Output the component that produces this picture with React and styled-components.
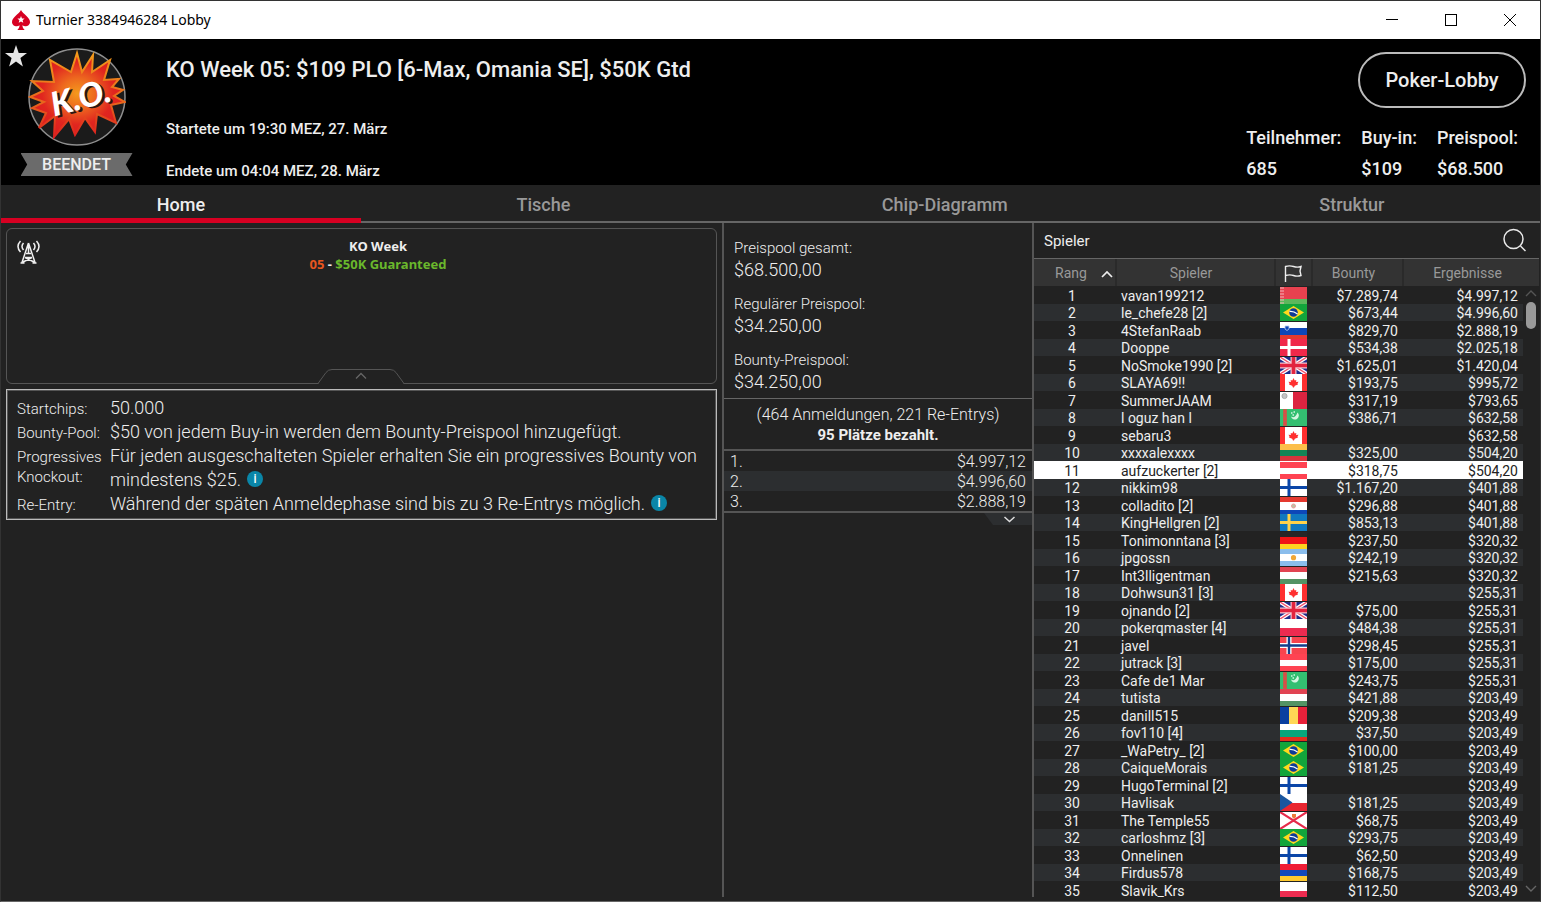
import React from 'react';
import styled, { createGlobalStyle, css } from 'styled-components';

const FLAGS = {
    by: { rows: [['#e8414f', 12], ['#5cb85c', 5]] },
    br: { rows: [['#12a53b', 17]] },
    si: { rows: [['#fff', 6], ['#0d47b8', 7], ['#e4392f', 4]] },
    dk: { rows: [['#f0284a', 17]], cross: ['#fff', 3] },
    gb: { rows: [['#1f2d8a', 17]] },
    ca: { cols: [['#ff2f2f', 5], ['#fff', 17], ['#ff2f2f', 5]] },
    mt: { cols: [['#fff', 13], ['#dc2440', 14]] },
    tm: { rows: [['#33bf71', 17]] },
    lt: { rows: [['#fcbe49', 6], ['#148556', 6], ['#d8343c', 5]] },
    at: { rows: [['#ff4352', 6], ['#fff', 6], ['#ff4352', 5]] },
    fi: { rows: [['#fff', 17]], cross: ['#0a46a8', 3] },
    py: { rows: [['#e4392f', 5], ['#fff', 8], ['#0d47b8', 4]] },
    se: { rows: [['#1079bf', 17]], cross: ['#ffd24a', 3] },
    de: { rows: [['#262626', 5], ['#f01515', 7], ['#ffd31f', 5]] },
    ar: { rows: [['#8abdec', 5], ['#fff', 7], ['#8abdec', 5]] },
    hu: { rows: [['#e14352', 5], ['#fff', 7], ['#539364', 5]] },
    pl: { rows: [['#fff', 9], ['#ed2b50', 8]] },
    no: { rows: [['#f7444e', 17]], cross: ['#fff', 5] },
    ro: { cols: [['#0a3fa0', 9], ['#ffd755', 9], ['#e8213a', 9]] },
    bg: { rows: [['#fff', 6], ['#06a77c', 7], ['#e0301e', 4]] },
    cz: { rows: [['#fff', 9], ['#e92630', 8]] },
    je: { rows: [['#fff', 17]] },
    am: { rows: [['#f01c35', 6], ['#1148ba', 6], ['#fec92e', 5]] },
};

const PLAYERS = [
    ['vavan199212', 'by', '$7.289,74', '$4.997,12'],
    ['le_chefe28 [2]', 'br', '$673,44', '$4.996,60'],
    ['4StefanRaab', 'si', '$829,70', '$2.888,19'],
    ['Dooppe', 'dk', '$534,38', '$2.025,18'],
    ['NoSmoke1990 [2]', 'gb', '$1.625,01', '$1.420,04'],
    ['SLAYA69‼', 'ca', '$193,75', '$995,72'],
    ['SummerJAAM', 'mt', '$317,19', '$793,65'],
    ['l oguz han l', 'tm', '$386,71', '$632,58'],
    ['sebaru3', 'ca', '', '$632,58'],
    ['xxxxalexxxx', 'lt', '$325,00', '$504,20'],
    ['aufzuckerter [2]', 'at', '$318,75', '$504,20'],
    ['nikkim98', 'fi', '$1.167,20', '$401,88'],
    ['colladito [2]', 'py', '$296,88', '$401,88'],
    ['KingHellgren [2]', 'se', '$853,13', '$401,88'],
    ['Tonimonntana [3]', 'de', '$237,50', '$320,32'],
    ['jpgossn', 'ar', '$242,19', '$320,32'],
    ['Int3lligentman', 'hu', '$215,63', '$320,32'],
    ['Dohwsun31 [3]', 'ca', '', '$255,31'],
    ['ojnando [2]', 'gb', '$75,00', '$255,31'],
    ['pokerqmaster [4]', 'pl', '$484,38', '$255,31'],
    ['javel', 'no', '$298,45', '$255,31'],
    ['jutrack [3]', 'at', '$175,00', '$255,31'],
    ['Cafe de1 Mar', 'tm', '$243,75', '$255,31'],
    ['tutista', 'hu', '$421,88', '$203,49'],
    ['danill515', 'ro', '$209,38', '$203,49'],
    ['fov110 [4]', 'bg', '$37,50', '$203,49'],
    ['_WaPetry_ [2]', 'br', '$100,00', '$203,49'],
    ['CaiqueMorais', 'br', '$181,25', '$203,49'],
    ['HugoTerminal [2]', 'fi', '', '$203,49'],
    ['Havlisak', 'cz', '$181,25', '$203,49'],
    ['The Temple55', 'je', '$68,75', '$203,49'],
    ['carloshmz [3]', 'br', '$293,75', '$203,49'],
    ['Onnelinen', 'fi', '$62,50', '$203,49'],
    ['Firdus578', 'am', '$168,75', '$203,49'],
    ['Slavik_Krs', 'pl', '$112,50', '$203,49'],
];

const TABS = ['Home', 'Tische', 'Chip-Diagramm', 'Struktur'];

const STATS = [
    ['Teilnehmer:', '685'],
    ['Buy-in:', '$109'],
    ['Preispool:', '$68.500'],
];

const POOLS = [
    ['Preispool gesamt:', '$68.500,00'],
    ['Regulärer Preispool:', '$34.250,00'],
    ['Bounty-Preispool:', '$34.250,00'],
];

const PAYOUTS = ['$4.997,12', '$4.996,60', '$2.888,19'];

const RULES = [
    { label: 'Startchips:', text: '50.000' },
    { label: 'Bounty-Pool:', text: '$50 von jedem Buy-in werden dem Bounty-Preispool hinzugefügt.' },
    { label: 'Progressives Knockout:', text: 'Für jeden ausgeschalteten Spieler erhalten Sie ein progressives Bounty von mindestens $25.', info: true },
    { label: 'Re-Entry:', text: 'Während der späten Anmeldephase sind bis zu 3 Re-Entrys möglich.', info: true },
];

function FlagDetail({ code }) {
    switch (code) {
        case 'by':
            return <path d="M1 0v17M3 0v17" stroke="#f3b6bb" strokeWidth="1" strokeDasharray="2 1" />;
        case 'br':
            return (
                <g>
                    <path d="M13.500 2L24 8.500 13.500 15 3 8.500z" fill="#ffd91c" />
                    <circle cx="13.500" cy="8.500" r="4.300" fill="#0f3a97" />
                    <path d="M9.500 7.500q4-.5 8 2.500" stroke="#fff" strokeWidth="1.300" fill="none" />
                </g>
            );
        case 'si':
            return <path d="M5 4h4v3q-2 3-4 0z" fill="#0d47b8" stroke="#b9cdf0" strokeWidth=".8" />;
        case 'gb':
            return (
                <g>
                    <path d="M0 0l27 17M27 0L0 17" stroke="#fff" strokeWidth="4" />
                    <path d="M0 0l27 17M27 0L0 17" stroke="#f2506a" strokeWidth="1.400" />
                    <path d="M13.500 0v17M0 8.500h27" stroke="#f6c3cd" strokeWidth="6" />
                    <path d="M13.500 0v17M0 8.500h27" stroke="#e2233f" strokeWidth="3.600" />
                </g>
            );
        case 'ca':
            return <path d="M13.500 4l1.200 2.500 1.600-.5-.2 2 2.400-.2-1 1.800.5 1-3.200 1.200-.8 1.700h-1l-.8-1.700L9 10.600l.5-1-1-1.800 2.400.2-.2-2 1.600.5z" fill="#ff2f2f" />;
        case 'mt':
            return <circle cx="4.500" cy="4" r="2.600" fill="#c4c4c4" stroke="#999" strokeWidth=".7" />;
        case 'tm':
            return (
                <g>
                    <path d="M5 0v17" stroke="#b8654a" strokeWidth="4" />
                    <path d="M5 1v15" stroke="#e04848" strokeWidth="2" strokeDasharray="3 1" />
                    <path d="M17.500 3.500a4 4 0 1 1-6.500 4q4 2.500 6.500-4z" fill="#d5f5e2" />
                    <path d="M11 4h1.500M13.500 3H15M12.500 6H14" stroke="#d5f5e2" strokeWidth="1.300" />
                </g>
            );
        case 'py':
            return <circle cx="13.500" cy="9" r="2" fill="#b9c7a6" stroke="#ec9c9c" />;
        case 'ar':
            return <circle cx="13.500" cy="8.700" r="2.600" fill="#f1a736" />;
        case 'no':
            return <path d="M9 0v17M0 8.500h27" stroke="#123f8c" strokeWidth="2.400" />;
        case 'cz':
            return <path d="M0 0l12.500 8.500L0 17z" fill="#1a569f" />;
        case 'je':
            return (
                <g>
                    <path d="M0 0l27 17M27 0L0 17" stroke="#e62b4b" strokeWidth="2.200" />
                    <path d="M12 2h4v3l-2 2-2-2z" fill="#ec7a3c" />
                </g>
            );
        default:
            return null;
    }
}

function Flag({ code }) {
    const { rows, cols, cross } = FLAGS[code];
    let at = 0;
    return (
        <FlagSvg viewBox="0 0 27 17" role="img" aria-label={code.toUpperCase()}>
            {(rows || cols).map(([color, size], i) => {
                const start = at;
                at += size;
                return rows
                    ? <rect key={i} x="0" y={start} width="27" height={size} fill={color} />
                    : <rect key={i} x={start} y="0" width={size} height="17" fill={color} />;
            })}
            {cross && <path d="M9 0v17M0 8.500h27" stroke={cross[0]} strokeWidth={cross[1]} />}
            <FlagDetail code={code} />
        </FlagSvg>
    );
}

function TitleBar() {
    return (
        <Bar>
            <svg width="18" height="20" viewBox="0 0 18 20" aria-hidden="true">
                <path d="M9 0C11 4 18 7.500 18 12c0 4-5 5.500-7.600 3.300.1 2 .8 3.200 2 4.200v.5H5.600v-.5c1.200-1 1.900-2.200 2-4.200C5 17.500 0 16 0 12 0 7.500 7 4 9 0z" fill="#d70022" />
                <path d="M9 6l1 2.400 2.600.2-2 1.700.7 2.500L9 11.400l-2.300 1.400.7-2.500-2-1.700 2.600-.2z" fill="#fff" />
            </svg>
            <BarTitle>Turnier 3384946284 Lobby</BarTitle>
            <BarButton aria-label="Minimieren">
                <svg width="12" height="12" stroke="#000" fill="none" shapeRendering="crispEdges"><path d="M0 5.500h12" /></svg>
            </BarButton>
            <BarButton aria-label="Maximieren">
                <svg width="12" height="12" stroke="#000" fill="none" shapeRendering="crispEdges"><path d="M.5.5h11v11H.5z" /></svg>
            </BarButton>
            <BarButton aria-label="Schließen">
                <svg width="12" height="12" stroke="#000" fill="none"><path d="M0 0l12 12M12 0L0 12" /></svg>
            </BarButton>
        </Bar>
    );
}

function Logo() {
    return (
        <svg width="98" height="98" viewBox="0 0 98 98" role="img" aria-label="K.O.">
            <defs>
                <radialGradient id="blast" cx="50%" cy="48%" r="50%">
                    <stop offset="0" stopColor="#f59a1c" />
                    <stop offset=".35" stopColor="#ee6a1f" />
                    <stop offset=".75" stopColor="#e0261f" />
                    <stop offset="1" stopColor="#dd1f1f" />
                </radialGradient>
                <linearGradient id="edge" x1="0" y1="0" x2="0" y2="1">
                    <stop offset="0" stopColor="#f39a1a" />
                    <stop offset=".6" stopColor="#e8641c" />
                    <stop offset="1" stopColor="#dd1f1f" />
                </linearGradient>
            </defs>
            <circle cx="49" cy="49" r="48" fill="#1b1b1b" stroke="#8f8f8f" strokeWidth="1.500" />
            <path
                d="M49 5L54 24 65 7 64 24 82 12 76 32 91 31 84 39 95 42 86 48 97 54 83 57 88 75 69 66 67 84 57 70 47 87 41 71 26 89 27 68 11 80 18 65 4 60 16 54 2 49 15 43 4 33 26 34 22 12 43 24z"
                fill="url(#blast)"
                stroke="url(#edge)"
                strokeWidth="2"
            />
            <LogoText x="24" y="64" fill="#2a1512" transform="rotate(-15 49 49)">K.O.</LogoText>
            <LogoText x="22" y="62" fill="#fff" transform="rotate(-15 49 49)">K.O.</LogoText>
        </svg>
    );
}

function Header() {
    return (
        <Head>
            <Emblem>
                <StarButton aria-label="Favorit">
                    <svg width="22" height="22" viewBox="0 0 22 22"><path d="M11 0l2.700 8H22l-6.600 5 2.500 8.500L11 16.500l-6.900 5L6.600 13 0 8h8.300z" fill="#e6e6e6" /></svg>
                </StarButton>
                <Logo />
                <Ribbon>BEENDET</Ribbon>
            </Emblem>
            <Info>
                <Title>KO Week 05: $109 PLO [6-Max, Omania SE], $50K Gtd</Title>
                <Time>Startete um 19:30 MEZ, 27. März</Time>
                <Time>Endete um 04:04 MEZ, 28. März</Time>
            </Info>
            <Side>
                <LobbyButton>Poker-Lobby</LobbyButton>
                <Stats>
                    {STATS.map(([label, value]) => (
                        <div key={label}>
                            <dt>{label}</dt>
                            <dd>{value}</dd>
                        </div>
                    ))}
                </Stats>
            </Side>
        </Head>
    );
}

function Overview() {
    return (
        <Left>
            <Banner>
                <svg width="23" height="24" viewBox="0 0 23 24" fill="none" stroke="#f0f0f0" strokeWidth="1.500" aria-hidden="true">
                    <path d="M11.500 3L5 22.500M11.500 3L18 22.500M3.500 23h4M15.500 23h4M9 13.500h5M8 17.500h7M11.500 3v10M6 22l9-4.500M17 22l-9-4.500" />
                    <path d="M3.500 1q-5 5.500 0 11M6.500 3q-3 3.500 0 7M19.500 1q5 5.500 0 11M16.500 3q3 3.500 0 7" />
                </svg>
                <BannerText>
                    KO Week<br />
                    <Tint $color="#e8561f">05</Tint> - <Tint $color="#6ab82c">$50K Guaranteed</Tint>
                </BannerText>
                <Notch aria-label="Einklappen">
                    <svg width="88" height="15" viewBox="0 0 88 15" fill="none">
                        <path d="M0 14.500h1L9 3.500Q11 .5 15 .5h58q4 0 6 3l8 11h1" fill="#222" stroke="#555" />
                        <path d="M2 14.500h84" stroke="#222" strokeWidth="1" />
                        <path d="M39 9.500l5-5 5 5" stroke="#666" strokeWidth="1.300" />
                    </svg>
                </Notch>
            </Banner>
            <Rules>
                {RULES.map(({ label, text, info }) => (
                    <React.Fragment key={label}>
                        <dt>{label}</dt>
                        <dd>{text}{info && <InfoDot aria-label="Info">i</InfoDot>}</dd>
                    </React.Fragment>
                ))}
            </Rules>
        </Left>
    );
}

function Prizes() {
    return (
        <Middle>
            <Pools>
                {POOLS.map(([label, value]) => (
                    <div key={label}>
                        <dt>{label}</dt>
                        <dd>{value}</dd>
                    </div>
                ))}
            </Pools>
            <Entries>
                (464 Anmeldungen, 221 Re-Entrys)<br />
                <strong>95 Plätze bezahlt.</strong>
            </Entries>
            <Payouts>
                <tbody>
                    {PAYOUTS.map((value, i) => (
                        <tr key={value}>
                            <th scope="row">{i + 1}.</th>
                            <td>{value}</td>
                        </tr>
                    ))}
                </tbody>
            </Payouts>
            <MoreButton aria-label="Mehr anzeigen">
                <svg width="48" height="12" viewBox="0 0 48 12" fill="none">
                    <path d="M0 0h48v12H9z" fill="#2c2e30" />
                    <path d="M20.500 4l5 4.500 5-4.500" stroke="#ddd" strokeWidth="1.500" />
                </svg>
            </MoreButton>
        </Middle>
    );
}

function Players() {
    return (
        <Right>
            <PlayersHead>
                Spieler
                <SearchButton aria-label="Suchen">
                    <svg width="24" height="25" viewBox="0 0 24 25" fill="none" stroke="#e8e8e8" strokeWidth="1.500">
                        <circle cx="10.500" cy="11" r="9.500" />
                        <path d="M17.500 18l5 5" />
                    </svg>
                </SearchButton>
            </PlayersHead>
            <Scroll>
                <Table>
                    <colgroup>
                        <Col $w={82} /><col /><Col $w={37} /><Col $w={91} /><Col $w={120} /><Col $w={16} />
                    </colgroup>
                    <thead>
                        <tr>
                            <th>
                                <Sort>
                                    Rang
                                    <svg width="12" height="8" viewBox="0 0 12 8" fill="none"><path d="M1 7l5-5 5 5" stroke="#eee" strokeWidth="1.700" /></svg>
                                </Sort>
                            </th>
                            <NameHead>Spieler</NameHead>
                            <th aria-label="Land">
                                <svg width="18" height="17" viewBox="0 0 18 17" fill="none" stroke="#eee" strokeWidth="1.400">
                                    <path d="M1.500 17V1.500q4-1.300 8 0t7.500 0l-1 4.500 1 4.500q-4 1.300-7.500 0t-8 0" />
                                </svg>
                            </th>
                            <MoneyHead>Bounty</MoneyHead>
                            <ResultHead colSpan={2}>Ergebnisse</ResultHead>
                        </tr>
                    </thead>
                    <tbody>
                        {PLAYERS.map(([name, flag, bounty, result], i) => (
                            <Row key={name} $even={i % 2 === 1} $me={i === 10}>
                                <Rank>{i + 1}</Rank>
                                <Name>{name}</Name>
                                <FlagCell><Flag code={flag} /></FlagCell>
                                <Money>{bounty}</Money>
                                <Money>{result}</Money>
                            </Row>
                        ))}
                    </tbody>
                </Table>
                <ScrollTrack aria-hidden="true">
                    <svg width="12" height="8" fill="none" stroke="#555" strokeWidth="1.400"><path d="M1 7l5-5 5 5" /></svg>
                    <Thumb />
                    <svg width="12" height="8" fill="none" stroke="#666" strokeWidth="1.400"><path d="M1 1l5 5 5-5" /></svg>
                </ScrollTrack>
            </Scroll>
        </Right>
    );
}

export default function App() {
    return (
        <Window>
            <GlobalStyle />
            <TitleBar />
            <Header />
            <Tabs>
                {TABS.map((tab, i) => <Tab key={tab} $active={i === 0}>{tab}</Tab>)}
            </Tabs>
            <Main>
                <Overview />
                <Prizes />
                <Players />
            </Main>
        </Window>
    );
}

const GlobalStyle = createGlobalStyle`
    * {
        box-sizing: border-box;
    }
    body {
        margin: 0;
        background: #222;
        color: #eee;
        font-family: Roboto, "Liberation Sans", sans-serif;
    }
    button {
        display: flex;
        align-items: center;
        justify-content: center;
        padding: 0;
        border: 0;
        background: transparent;
        color: inherit;
        font: inherit;
    }
    dl, dd, h1, p {
        margin: 0;
    }
    svg {
        display: block;
        flex: none;
    }
`;
const Window = styled.div`
    display: flex;
    flex-direction: column;
    height: 100vh;
    border: 1px solid #333;
    border-bottom-color: #666;
`;
const Bar = styled.header`
    display: flex;
    align-items: center;
    height: 38px;
    padding: 0 1px 0 11px;
    background: #fff;
    color: #000;
`;
const BarTitle = styled.span`
    flex: 1;
    padding-left: 6px;
    font: 14px/20px "Noto Sans", sans-serif;
`;
const BarButton = styled.button`
    width: 59px;
    height: 38px;
`;
const Head = styled.section`
    display: flex;
    height: 146px;
    background: #000;
    font-weight: 500;
`;
const Emblem = styled.div`
    position: relative;
    display: flex;
    flex-direction: column;
    align-items: center;
    gap: 7px;
    width: 151px;
    padding-top: 9px;
`;
const StarButton = styled.button`
    position: absolute;
    left: 4px;
    top: 6px;
`;
const LogoText = styled.text`
    font: italic 900 33px Lato, sans-serif;
`;
const Ribbon = styled.div`
    width: 112px;
    height: 23px;
    background: #6b6b6b;
    clip-path: polygon(0 0, 100% 0, 94% 50%, 100% 100%, 0 100%, 6% 50%);
    font-size: 16px;
    line-height: 24px;
    text-align: center;
`;
const Info = styled.div`
    flex: 1;
    padding: 17px 0 0 14px;
`;
const Title = styled.h1`
    margin-bottom: 35px;
    font-size: 22px;
    font-weight: 500;
    line-height: 28px;
`;
const Time = styled.p`
    margin-bottom: 22px;
    font-size: 15px;
    line-height: 20px;
`;
const Side = styled.div`
    display: flex;
    flex-direction: column;
    align-items: flex-end;
    gap: 14px;
    padding: 13px 14px 0 0;
`;
const LobbyButton = styled.button`
    width: 168px;
    height: 56px;
    border: 2px solid #bbb;
    border-radius: 28px;
    font-size: 20px;
`;
const Stats = styled.dl`
    display: flex;
    gap: 20px;
    padding-right: 8px;
    font-size: 18px;
    line-height: 31px;
`;
const Tabs = styled.nav`
    display: flex;
    height: 38px;
    background: #222;
`;
const Tab = styled.button`
    flex: 1 1 auto;
    padding-top: 2px;
    border-bottom: 2px solid #666;
    color: #999;
    font-size: 18px;
    font-weight: 500;
    ${({ $active }) => $active && css`
        padding-top: 5px;
        border-bottom: 5px solid #d70022;
        color: #eee;
    `}
`;
const Main = styled.main`
    display: flex;
    flex: 1;
    min-height: 0;
    padding: 0 1px 4px 0;
`;
const Left = styled.section`
    flex: 1;
    padding: 5px;
`;
const Banner = styled.div`
    position: relative;
    display: flex;
    height: 156px;
    padding: 11px 0 0 10px;
    border: 1px solid #555;
    border-radius: 6px;
`;
const BannerText = styled.p`
    flex: 1;
    margin-top: -3px;
    font: bold 13px/18px "Noto Sans", sans-serif;
    text-align: center;
`;
const Tint = styled.span`
    color: ${({ $color }) => $color};
`;
const Notch = styled.button`
    position: absolute;
    left: 50%;
    bottom: -1px;
    margin-left: -45px;
`;
const Rules = styled.dl`
    display: grid;
    grid-template-columns: 93px 1fr;
    margin-top: 5px;
    padding: 6px 10px 3px 10px;
    border: 1px solid #bbb;
    box-shadow: inset 0 0 0 1px #555;
    dt {
        padding-top: 3px;
        font-size: 15px;
        font-weight: 300;
        line-height: 20px;
    }
    dd {
        font-size: 18px;
        font-weight: 300;
        line-height: 24px;
    }
`;
const InfoDot = styled.button`
    display: inline-flex;
    width: 16px;
    height: 16px;
    margin-left: 6px;
    border-radius: 50%;
    background: #0a86a8;
    color: #fff;
    font-size: 12px;
    font-weight: 500;
    line-height: 16px;
    vertical-align: 3px;
`;
const Middle = styled.section`
    width: 310px;
    border-left: 2px solid #555;
`;
const Pools = styled.dl`
    display: grid;
    gap: 12px;
    padding: 14px 10px 5px;
    border-bottom: 1px solid #666;
    font-weight: 300;
    line-height: 22px;
    dt {
        font-size: 15px;
    }
    dd {
        font-size: 18px;
    }
`;
const Entries = styled.p`
    padding: 6px 0 4px;
    border-bottom: 2px solid #555;
    font-size: 16px;
    font-weight: 300;
    line-height: 20px;
    text-align: center;
    strong {
        font-size: 15px;
        font-weight: 700;
    }
`;
const Payouts = styled.table`
    width: 100%;
    border-collapse: collapse;
    border-bottom: 2px solid #555;
    font-size: 16px;
    line-height: 18px;
    th, td {
        padding: 2px 6px 0;
        font-weight: 300;
        text-align: right;
    }
    th {
        text-align: left;
    }
    tr:nth-child(even) {
        background: #2c2e30;
    }
`;
const MoreButton = styled.button`
    margin-left: auto;
`;
const Right = styled.section`
    display: flex;
    flex-direction: column;
    width: 507px;
    border-left: 2px solid #555;
`;
const PlayersHead = styled.div`
    display: flex;
    align-items: center;
    justify-content: space-between;
    height: 36px;
    padding: 0 12px 0 10px;
    border-bottom: 1px solid #666;
    font-size: 15px;
    font-weight: 400;
`;
const SearchButton = styled.button`
    width: 24px;
    height: 25px;
`;
const Scroll = styled.div`
    position: relative;
    flex: 1;
    min-height: 0;
    overflow: hidden;
`;
const Table = styled.table`
    width: 100%;
    table-layout: fixed;
    border-collapse: collapse;
    font-size: 14px;
    line-height: 15px;
    th {
        height: 27px;
        padding: 2px 0 0;
        border-right: 2px solid #2a2a2a;
        background: #333;
        color: #999;
        font-weight: 400;
        text-align: center;
        svg {
            margin: 0 auto;
        }
    }
    td {
        padding: 2px 0 0;
    }
`;
const Col = styled.col`
    width: ${({ $w }) => $w}px;
`;
const Sort = styled.div`
    display: flex;
    align-items: center;
    gap: 14px;
    padding-left: 21px;
    th & svg {
        margin: 0;
    }
`;
const NameHead = styled.th`
    && {
        padding-right: 9px;
    }
`;
const MoneyHead = styled.th`
    && {
        padding-right: 8px;
    }
`;
const ResultHead = styled.th`
    && {
        padding-right: 8px;
        border-right: 0;
    }
`;
const Row = styled.tr`
    height: ${({ $even }) => ($even ? 17 : 18)}px;
    td {
        background: ${({ $even, $me }) => ($me ? '#fff' : $even ? '#2c2e30' : '#222')};
        color: ${({ $me }) => ($me ? '#222' : '#eee')};
    }
`;
const Rank = styled.td`
    && {
        padding-right: 6px;
        text-align: center;
    }
`;
const Name = styled.td`
    && {
        padding-left: 5px;
        white-space: nowrap;
    }
`;
const FlagCell = styled.td`
    && {
        padding: 0 0 0 5px;
        vertical-align: bottom;
    }
`;
const Money = styled.td`
    && {
        padding-right: 5px;
        text-align: right;
    }
`;
const FlagSvg = styled.svg`
    width: 27px;
    height: 17px;
`;
const ScrollTrack = styled.div`
    position: absolute;
    top: 30px;
    right: 2px;
    bottom: 4px;
    display: flex;
    flex-direction: column;
    align-items: center;
    width: 12px;
    gap: 5px;
`;
const Thumb = styled.div`
    width: 10px;
    height: 27px;
    margin-bottom: auto;
    border-radius: 5px;
    background: #999;
`;
